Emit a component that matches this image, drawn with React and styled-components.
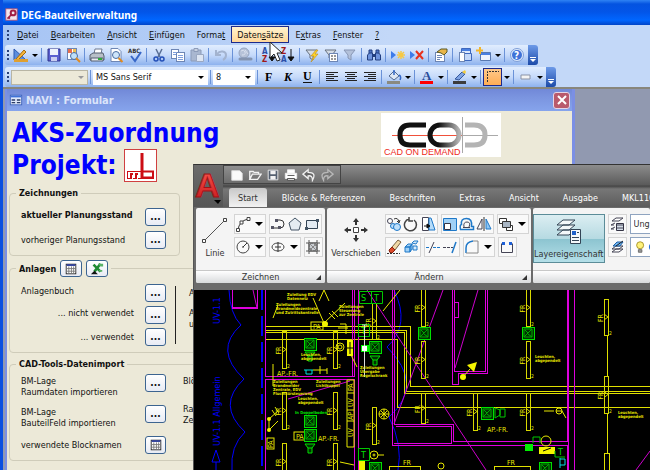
import React from "react";
import styled, { createGlobalStyle, css, ThemeProvider } from "styled-components";

const theme = {
  colors: {
    frame: "#0a4fe0",
    bar: "#c3d8f8",
    form: "#ece9d8",
    heading: "#0000ff",
    cad: "#6b6b6b",
    ribbon: "#f4f4f4",
  },
  fonts: {
    ui: '"DejaVu Sans Condensed", "Noto Sans", sans-serif',
    title: '"Noto Sans", "Open Sans", sans-serif',
  },
};

/* ---------- icons, all on a 16 x 16 grid ---------- */

const sheet = (x, y, w, h) => (
  <rect x={x} y={y} width={w} height={h} fill="#fff" stroke="#6d86b5" />
);

const funnel = (fill) => (
  <path d="M2 3h11l-4 5v5l-3-2V8z" fill={fill} stroke="#66707e" />
);

const sortText = (a, b) => (
  <>
    <text x="1" y="7" fontSize="8" fontWeight="bold" fill={a === "A" ? "#2b4fa8" : "#a01818"}>{a}</text>
    <text x="1" y="15" fontSize="8" fontWeight="bold" fill={b === "A" ? "#2b4fa8" : "#a01818"}>{b}</text>
    <path d="M11 2v10M8 10l3 4 3-4z" stroke="#111" fill="#111" />
  </>
);

const alignLines = (rows) => (
  <path d={rows.map(([x, w], i) => `M${x} ${3.5 + i * 2}h${w}`).join("")} stroke="#222" />
);

const icons = {
  design: (
    <>
      <path d="M1 2v11h12z" fill="#5b8ede" stroke="#2c58b0" />
      <path d="M3 12l8-9 2 2-8 8z" fill="#f5b53b" stroke="#a46a10" />
      <path d="M1 13.5h14" stroke="#e0a030" strokeWidth="3" />
    </>
  ),
  save: (
    <>
      <path d="M2 2h12v12H2z" fill="#5a5fd0" stroke="#30348c" />
      <path d="M4 2h8v6H4z" fill="#eef2fc" />
      <path d="M5 10h6v4H5z" fill="#c9cdf0" />
    </>
  ),
  fileSearch: (
    <>
      {sheet(2.5, 1.5, 9, 11)}
      <path d="M3 2h4v4H3z" fill="#e86f4e" />
      <path d="M8 2h3v4H8z" fill="#f0c050" />
      <circle cx="9" cy="9" r="3.5" fill="#bfe0fa" stroke="#4a6ca0" />
      <path d="M11 11l4 4" stroke="#e08a20" strokeWidth="2" />
    </>
  ),
  print: (
    <>
      <path d="M5 7l1-5h7l-1 5z" fill="#fff" stroke="#6d7890" />
      <path d="M1 8l3-2h10l1 3v4H1z" fill="#b8c0c8" stroke="#555f70" />
      <path d="M2 11h12v3H2z" fill="#e8ecf0" stroke="#555f70" />
      <path d="M9 12h4" stroke="#2faa3c" strokeWidth="2" />
    </>
  ),
  preview: (
    <>
      <path d="M3 1.5h7l3 3v10H3z" fill="#fff" stroke="#6d86b5" />
      <circle cx="8" cy="8" r="3.5" fill="#cfe6fa" stroke="#4a6ca0" />
      <path d="M10.5 11l4 4" stroke="#e08a20" strokeWidth="2" />
    </>
  ),
  spell: (
    <>
      <text x="1" y="6" fontSize="6" fontWeight="bold" fill="#333">ABC</text>
      <path d="M4 9l4 5 6-9" fill="none" stroke="#3767c8" strokeWidth="2" />
    </>
  ),
  cut: (
    <>
      <path d="M5 2l4 8M11 2l-4 8" stroke="#5a6f95" strokeWidth="1.5" />
      <circle cx="5" cy="12" r="2" fill="none" stroke="#2450b8" strokeWidth="1.5" />
      <circle cx="11" cy="12" r="2" fill="none" stroke="#2450b8" strokeWidth="1.5" />
    </>
  ),
  copy: (
    <>
      {sheet(1.5, 2.5, 7, 9)}
      {sheet(6.5, 5.5, 8, 9)}
      <path d="M3 5.5h4M3 7.5h3M8 8.5h5M8 10.5h5M8 12.5h5" stroke="#7f9fdc" />
    </>
  ),
  paste: (
    <>
      <path d="M2 3h10v11H2z" fill="#a9b7d0" stroke="#8c9bb8" />
      <path d="M5 1.5h4v3H5z" fill="#c9d2e2" stroke="#8c9bb8" />
      <path d="M7.5 7.5h7v7h-7z" fill="#dde5f2" stroke="#9aa8c2" />
    </>
  ),
  undo: <path d="M3 3v5h5M4 7c3-4 9-3 9 1 0 2-1 4-3 5" fill="none" stroke="#a3b3cf" strokeWidth="2" />,
  link: (
    <>
      <circle cx="7" cy="6" r="5" fill="#b6c2d8" stroke="#96a5c0" />
      <path d="M4 4q3-2 4 1t-3 3M8 3l3 4" fill="none" stroke="#d9e1ef" />
      <path d="M3 12h5M9 12h5" stroke="#8494b0" strokeWidth="3" strokeLinecap="round" />
    </>
  ),
  sortAsc: sortText("A", "Z"),
  sortDesc: sortText("Z", "A"),
  filterSelect: (
    <>
      {funnel("#d5dce6")}
      <path d="M12 3L7 9h3l-3 6 7-8h-3l3-4z" fill="#ffd42a" stroke="#c08a10" strokeWidth=".6" />
    </>
  ),
  filterForm: (
    <>
      {funnel("#d5dce6")}
      {sheet(6.5, 6.5, 8, 8)}
      <path d="M8 9h5M8 12h5" stroke="#333" strokeDasharray="2 1" />
    </>
  ),
  filter: <path d="M2 3h11l-4 5v5l-3-2V8z" fill="#b3c1da" stroke="#8796b4" />,
  find: (
    <>
      <path d="M3 3h3v4H3zM10 3h3v4h-3z" fill="#4d75c4" stroke="#223f80" />
      <path d="M1.5 8l2-2h3v7h-5zM9.5 6h3l2 2v5h-5z" fill="#6e93dc" stroke="#223f80" />
      <path d="M6 7h4v3H6z" fill="#223f80" />
    </>
  ),
  newRecord: (
    <>
      <path d="M1 4l5 4-5 4z" fill="#3d7bea" />
      <path d="M11 4v8M7 8h8M8 5l6 6M14 5l-6 6" stroke="#f6c945" strokeWidth="1.5" />
    </>
  ),
  deleteRecord: (
    <>
      <path d="M1 4l5 4-5 4z" fill="#3d7bea" />
      <path d="M7 4l7 8M14 4l-7 8" stroke="#e8311c" strokeWidth="2" />
    </>
  ),
  properties: (
    <>
      {sheet(2.5, 5.5, 9, 9)}
      <path d="M4 8.5h5M4 10.5h5M4 12.5h3" stroke="#6d86b5" />
      <path d="M4 5l4-3h6v3l-3 3-3-2z" fill="#e8b548" stroke="#5b5a28" />
    </>
  ),
  dbWindow: (
    <>
      <path d="M4.5 1.5h9v8h-9z" fill="#dce8fb" stroke="#3e68bd" />
      <path d="M5 2h8v2H5z" fill="#4a7fe0" />
      <path d="M7.5 6.5h7v7h-7z" fill="#c4d8f8" stroke="#3e68bd" />
      {sheet(2.5, 5.5, 5, 9)}
    </>
  ),
  newObject: (
    <>
      <path d="M4.5 5.5h10v8h-10z" fill="#eef3fc" stroke="#5878b0" />
      <path d="M5 6h9v2H5z" fill="#4a7fe0" />
      <path d="M4 0v7M0 3.5h7" stroke="#f3b62c" strokeWidth="2" />
    </>
  ),
  help: (
    <>
      <circle cx="8" cy="8" r="6.5" fill="#dbe8fc" stroke="#7f9fd8" />
      <circle cx="8" cy="8" r="5" fill="#3f72d8" />
      <text x="5" y="12" fontSize="10" fontWeight="bold" fill="#fff">?</text>
    </>
  ),
  bold: <text x="3" y="12" fontSize="12" fontWeight="bold" fontFamily="Liberation Serif, serif">F</text>,
  italic: <text x="3" y="12" fontSize="12" fontWeight="bold" fontStyle="italic" fontFamily="Liberation Serif, serif">K</text>,
  underline: (
    <>
      <text x="3" y="11" fontSize="12" fontWeight="bold" fontFamily="Liberation Serif, serif">U</text>
      <path d="M3 13.5h9" stroke="#111" />
    </>
  ),
  alignLeft: alignLines([[2, 12], [2, 8], [2, 12], [2, 8], [2, 12]]),
  alignCenter: alignLines([[2, 12], [4, 8], [2, 12], [4, 8], [2, 12]]),
  alignRight: alignLines([[2, 12], [6, 8], [2, 12], [6, 8], [2, 12]]),
  fill: (
    <>
      <path d="M3 7l5-5 5 5-5 4z" fill="#dfe8f5" stroke="#53698f" />
      <path d="M8 1v5M13 6c2 1 2 3 1 5" stroke="#3468c8" fill="none" strokeWidth="1.5" />
      <path d="M1 12h13v3H1z" fill="#8a8a80" />
    </>
  ),
  fontColor: (
    <>
      <text x="3" y="11" fontSize="13" fontWeight="bold" fontFamily="Liberation Serif, serif" fill="#2a4d9a">A</text>
      <path d="M1 12h13v3H1z" fill="#ff0000" />
    </>
  ),
  lineColor: (
    <>
      <path d="M3 10l7-7 3 2-6 6z" fill="#7fa3e4" stroke="#35589c" />
      <path d="M10 3l3-2 1 2-1 2z" fill="#f4cd3c" />
      <path d="M1 12h13v3H1z" fill="#3c3c3c" />
    </>
  ),
  border: <path d="M2.5 13V2.5H14" stroke="#333" strokeDasharray="2 1" fill="none" />,
  effect: <path d="M3 6h9v4H3z" fill="#f4f4f4" stroke="#8a93a6" />,
  grid: (
    <>
      <rect x="2.5" y="2.5" width="11" height="11" fill="#fff" stroke="#222" />
      <path d="M3 3.5h10" stroke="#2a3c9a" strokeWidth="2" />
      <path d="M3 7.5h10M3 10.5h10M5.5 5v8M8.5 5v8M11 5v8" stroke="#777" />
    </>
  ),
  excel: (
    <>
      <path d="M4 3l8 8M12 2L5 11" stroke="#1e8a32" strokeWidth="3" />
      <path d="M9 2h6v3h-3zM10 9h4v2h-3z" fill="#59b268" />
      <path d="M1 14l4-4 4 4z" fill="#111" />
    </>
  ),
  formWindow: (
    <>
      <rect x="1.5" y="2.5" width="13" height="11" fill="#dfe8fa" stroke="#3e62b8" />
      <path d="M2 4h12" stroke="#3f72d8" strokeWidth="2" />
      <path d="M3 8h4M3 11h4M9 8h4M9 11h4" stroke="#2c3c68" strokeWidth="1.5" />
    </>
  ),
  access: (
    <>
      <rect x="1" y="1" width="14" height="14" fill="#f2e5ec" stroke="#b05070" />
      <circle cx="10" cy="6" r="3" fill="none" stroke="#a21f45" strokeWidth="2.5" />
      <path d="M8 8l-5 5M4 11l2 2" stroke="#a21f45" strokeWidth="2" />
    </>
  ),
  /* quick access bar */
  qNew: <path d="M2 3h9l3 3v8H2z" fill="#fafafa" stroke="#ddd" />,
  qOpen: <path d="M2 13V4h4l1 1h5v2H5l-3 6h9l4-6H5" fill="none" stroke="#f2f2f2" strokeWidth="1.5" />,
  qSave: (
    <>
      <path d="M2.5 2.5h11v11h-11z" fill="#556070" stroke="#f2f2f2" />
      <path d="M5 3h6v4H5zM5 9h6v4H5z" fill="#f2f2f2" />
    </>
  ),
  qPrint: (
    <>
      <path d="M4 2h8v4H4zM1.5 6h13v6h-13z" fill="#fff" stroke="#eee" />
      <path d="M4 8.5h8M4 12h8v2H4z" stroke="#444" fill="#fff" />
    </>
  ),
  qUndo: <path d="M7 2L1 7l6 5V9q5-1 5 5 5-9-5-9z" fill="#666" stroke="#f0f0f0" strokeWidth="1.5" />,
  qRedo: <path d="M9 2l6 5-6 5V9q-5-1-5 5-5-9 5-9z" fill="#777" stroke="#b8b8b8" strokeWidth="1.5" />,
  /* draw panel */
  arc: (
    <>
      <path d="M3 14Q4 5 13 3" fill="none" stroke="#333" />
      <path d="M1.5 12.5h3v3h-3zM5 5h3v3H5zM12 1.5h3v3h-3z" fill="#fff" stroke="#444" />
    </>
  ),
  polyline: (
    <>
      <path d="M2 12h8q4 0 4-4t-4-4H7" fill="none" stroke="#333" />
      <path d="M1 10h3v3H1zM8 10h3v3H8zM5 3h3v3H5z" fill="#556" />
    </>
  ),
  polygon: <path d="M8 2l6 5-2 7H4L2 7z" fill="#e4ecf2" stroke="#456" />,
  rectangle: (
    <>
      <path d="M2.5 4.5h11v8h-11z" fill="#e3ebf3" stroke="#345" />
      <path d="M1 11h3v3H1zM12 3h3v3h-3z" fill="#456" />
    </>
  ),
  circle: (
    <>
      <circle cx="8" cy="8" r="6" fill="#fafafa" stroke="#444" />
      <path d="M8 8l4-4M7 8h2" stroke="#333" />
    </>
  ),
  ellipse: (
    <>
      <ellipse cx="8" cy="8" rx="6" ry="4" fill="#fafafa" stroke="#444" />
      <path d="M8 3v10M5 8h6" stroke="#333" />
    </>
  ),
  hatch: (
    <>
      <path d="M4 4h8v8H4zM4 1v14M12 1v14M1 4h14M1 12h14" fill="#c9cdd2" stroke="#555" />
      <path d="M4 8l4 4M4 4l8 8M8 4l4 4M12 4l-8 8" stroke="#888" />
    </>
  ),
  /* modify panel */
  copyObjects: (
    <>
      <circle cx="4" cy="5" r="2.5" fill="#fff" stroke="#445" />
      <circle cx="7" cy="10" r="2.5" fill="#bfe0fb" stroke="#1e78c8" />
      <circle cx="11" cy="11" r="3.5" fill="#bfe0fb" stroke="#1e78c8" />
      <path d="M8 3q4-2 5 3M11 5l2 2 1-3" fill="none" stroke="#333" />
    </>
  ),
  rotate: <path d="M6 3a6 6 0 1 0 5 1M6 1v4h4" fill="none" stroke="#444" strokeWidth="1.5" />,
  stretch: (
    <>
      <path d="M2.5 1.5h6v13h-6z" fill="#fff" stroke="#445" />
      <path d="M9 2h2l4 12H9z" fill="#b5dcfa" stroke="#1e78c8" />
      <path d="M4 10h4M7 8l3 2-3 2z" fill="#111" stroke="#111" />
    </>
  ),
  scale: (
    <>
      <path d="M1.5 2.5h13v12h-13z" fill="#9fd0f6" stroke="#1e78c8" />
      <path d="M2.5 7.5h6v6h-6z" fill="#fff" stroke="#334" />
    </>
  ),
  offset: (
    <>
      <path d="M1.5 13.5h13v-3h-2q1-8-5-8t-5 6q-2 0-1 5z" fill="none" stroke="#1e78c8" strokeWidth="1.5" />
      <path d="M4 11.5h7M5 11q-1-5 3-5t2 5" fill="none" stroke="#445" />
    </>
  ),
  mirror: (
    <>
      <path d="M6 3v10H1z" fill="#fff" stroke="#445" />
      <path d="M10 3v10h5z" fill="#8fc6f3" stroke="#1e78c8" />
      <path d="M8 1v14" stroke="#333" />
    </>
  ),
  array: (
    <>
      <path d="M1.5 2.5h7v5h-7zM8.5 9.5h6v5h-6z" fill="#fff" stroke="#333" />
      <path d="M4.5 5.5h8v6h-8z" fill="#a9b6c4" stroke="#333" />
    </>
  ),
  erase: (
    <>
      <path d="M6 8l6-7 3 2-6 8z" fill="#f0d8a6" stroke="#776040" />
      <path d="M3 11l3-3 3 3-3 3q-3 0-3-3z" fill="#dc4a2a" stroke="#8a2410" />
      <path d="M1 14.5h13" stroke="#333" strokeDasharray="2 1" />
    </>
  ),
  explode: (
    <>
      <path d="M2 8l3-3h4l-2 3zM2 8h5v5H2zM7 8l2-3v5l-2 3z" fill="#9fd0f6" stroke="#1e78c8" />
      <path d="M9 4l2-2h4l-2 3zM10 7h4v4h-4z" fill="#d4ebfd" stroke="#1e78c8" />
    </>
  ),
  trim: (
    <>
      <path d="M1 8.5h4M8 8.5h8" stroke="#1e78c8" strokeDasharray="3 1" />
      <path d="M9 3L4 14" stroke="#445" />
    </>
  ),
  extend: (
    <>
      <path d="M1 8.5h10" stroke="#445" strokeDasharray="3 1" />
      <path d="M14 3l-4 11" stroke="#1e78c8" strokeWidth="1.5" />
    </>
  ),
  fillet: (
    <>
      <path d="M2 14V9q0-6 7-7" fill="none" stroke="#1e78c8" strokeWidth="1.5" />
      <path d="M9 2h5v12H2" fill="none" stroke="#888" />
    </>
  ),
  join: (
    <>
      <path d="M2.5 4.5v9h11v-9" fill="none" stroke="#445" />
      <path d="M3 4.5h3M10 4.5h3" stroke="#1e60d8" strokeWidth="3" />
    </>
  ),
  layerState: (
    <>
      <path d="M3 5l4-3h7l-4 3zM2 9l4-2M2 13l4-2M2 9h3M2 13h3" fill="#fff" stroke="#445" />
      <path d="M7.5 7.5h7v7h-7z" fill="#d5dde8" stroke="#334" />
      <path d="M8 9h6M8 12h6" stroke="#445" />
    </>
  ),
  layerMatch: (
    <>
      <path d="M3 13l4-3h7l-4 3zM3 10l4-3h7l-4 3z" fill="#fff" stroke="#445" />
      <path d="M4 7l4-4h6l-3 4z" fill="#6fb5f0" stroke="#1e60a8" />
      <path d="M7 7l7-5" stroke="#222" />
    </>
  ),
  bulb: (
    <>
      <circle cx="7" cy="6" r="4" fill="#fff27a" stroke="#a08c20" />
      <path d="M5 11h4v3H5z" fill="#999" stroke="#666" />
    </>
  ),
  sun: (
    <>
      <circle cx="6" cy="8" r="5" fill="#2c74d8" />
      <circle cx="8" cy="8" r="4" fill="#ffe04a" />
    </>
  ),
};

const Icon = ({ name, size = 16 }) => (
  <svg width={size} height={size} viewBox="0 0 16 16" aria-hidden="true">
    {icons[name]}
  </svg>
);

/* ---------- toolbar data ---------- */

const menu = [
  ["", "D", "atei"],
  ["", "B", "earbeiten"],
  ["", "A", "nsicht"],
  ["", "E", "infügen"],
  ["Forma", "t", ""],
  ["Daten", "s", "ätze"],
  ["E", "x", "tras"],
  ["", "F", "enster"],
  ["", "?", ""],
];

// "|" is a divider, "v" the small arrow next to a split button
const standardBar = [
  "design", "v", "|", "save", "fileSearch", "|", "print", "preview", "spell", "|",
  "cut", "copy", "paste", "|", "undo", "|", "link", "|", "sortAsc", "sortDesc", "|",
  "filterSelect", "filterForm", "filter", "|", "find", "|", "newRecord", "deleteRecord", "|",
  "properties", "|", "dbWindow", "newObject", "v", "|", "help",
];

const formatBar = [
  "|", "bold", "italic", "underline", "|", "alignLeft", "alignCenter", "alignRight", "|",
  "fill", "v", "|", "fontColor", "v", "|", "lineColor", "v", "|", "border", "v", "|", "effect", "v",
];

const ToolItems = ({ items }) =>
  items.map((item, i) => {
    if (item === "|") return <Divider key={i} />;
    if (item === "v") return <DropArrow key={i} type="button" aria-label="Optionen" />;
    return (
      <ToolButton key={i} type="button" aria-label={item} $active={item === "border"}>
        <Icon name={item} />
      </ToolButton>
    );
  });

const Combo = ({ label, value, width, disabled }) => (
  <ComboBox $width={width} $disabled={disabled}>
    <select aria-label={label} disabled={disabled}>
      <option>{value}</option>
    </select>
    <i />
  </ComboBox>
);

/* ---------- form window ---------- */

const FormRow = ({ id, label, bold, right, icon, top }) => (
  <Row $top={top}>
    <RowLabel htmlFor={id} $bold={bold} $right={right} $top={top}>
      {label}
    </RowLabel>
    <FormButton id={id} type="button">
      {icon ? <Icon name={icon} size={14} /> : "..."}
    </FormButton>
  </Row>
);

const ProjectLogo = () => (
  <svg width="33" height="33" viewBox="0 0 33 33" role="img" aria-label="mb">
    <rect x=".5" y=".5" width="32" height="32" fill="#fff" stroke="#d04040" />
    <g fill="none" stroke="#cc0d14">
      <path d="M18 4v25" strokeWidth="3" />
      <path d="M18 22.5h11v6H18" strokeWidth="2" />
      <path d="M3.5 30v-8M3 22.5h14M3 29.5h3M9 29.5h2M14 29.5h16" />
      <path d="M7 30v-5h2M12 30v-5h2" strokeWidth="2" />
    </g>
  </svg>
);

const CodLogo = () => (
  <svg width="120" height="44" viewBox="0 0 120 44" role="img" aria-label="CAD ON DEMAND">
    <defs>
      <linearGradient id="ring">
        <stop offset="0.3" stopColor="#111" />
        <stop offset="1" stopColor="#b4b4b4" />
      </linearGradient>
    </defs>
    <rect width="120" height="44" fill="#fff" />
    <path d="M11 22.5h70" stroke="#f0503a" />
    <path d="M81 22.5h36" stroke="#aaa" />
    <path d="M45 12H29q-10 0-10 10t10 10h16" fill="none" stroke="#111" strokeWidth="5" />
    <rect x="49" y="12" width="29" height="20" rx="10" fill="none" stroke="url(#ring)" strokeWidth="5" />
    <path d="M84 12h9q11 0 11 10t-11 10h-9" fill="none" stroke="#b4b4b4" strokeWidth="5" />
    <path d="M81.5 4v36" stroke="#a8a8a8" />
    <text x="3" y="42" fontSize="9" fill="#ee2a1a" fontFamily="Liberation Sans, sans-serif">CAD ON DEMAND</text>
  </svg>
);

const FormWindow = () => (
  <NaviWindow>
    <NaviTitle>
      <Icon name="formWindow" size={14} />
      <span>NAVI : Formular</span>
      <CloseButton type="button" aria-label="Schließen">
        <svg width="10" height="10" viewBox="0 0 10 10" aria-hidden="true">
          <path d="M1 1l8 8M9 1L1 9" stroke="#fff" strokeWidth="2" />
        </svg>
      </CloseButton>
    </NaviTitle>
    <NaviBody>
      <NaviHeader>
        <h1>
          AKS-Zuordnung
          <span>
            Projekt: <ProjectLogo />
          </span>
        </h1>
        <CodLogo />
      </NaviHeader>
      <Group $narrow $pad={8}>
        <legend>Zeichnungen</legend>
        <Rows $gap={5}>
          <FormRow id="plan-now" label="aktueller Planungsstand" bold top />
          <FormRow id="plan-old" label="vorheriger Planungsstand" />
        </Rows>
      </Group>
      <Group $pad={7}>
        <legend>
          Anlagen
          <FormButton type="button" aria-label="Tabelle" $small><Icon name="grid" size={14} /></FormButton>
          <FormButton type="button" aria-label="Excel" $small><Icon name="excel" size={14} /></FormButton>
        </legend>
        <Split>
          <Rows $gap={4}>
            <FormRow id="book" label="Anlagenbuch" top />
            <FormRow id="unused" label="... nicht verwendet" right top />
            <FormRow id="used" label="... verwendet" right />
          </Rows>
          <Rule />
          <SideNotes>
            <p>A</p>
            <p>A<br />u</p>
          </SideNotes>
        </Split>
      </Group>
      <Group $pad={3}>
        <legend>CAD-Tools-Datenimport</legend>
        <Split>
          <Rows $gap={7}>
            <FormRow id="rooms" label={<>BM-Lage<br />Raumdaten importieren</>} top />
            <FormRow id="parts" label={<>BM-Lage<br />BauteilFeld importieren</>} top />
            <FormRow id="blocks" label="verwendete Blocknamen" icon="grid" />
          </Rows>
          <SideNotes $wide>
            <p>Blö</p>
            <p>Ra<br />Ze</p>
          </SideNotes>
        </Split>
      </Group>
    </NaviBody>
  </NaviWindow>
);

/* ---------- floor plan ---------- */

const Fixture = ({ x, y, h = 37 }) => (
  <g>
    <rect x={x + 0.5} y={y + 0.5} width="4" height={h} />
    <path d={`M${x} ${y + h / 2 - 3}l4 3-4 3`} />
    <g stroke="none" fill="#e8e800">
      <text transform={`translate(${x - 1} ${y + h / 2 + 5}) rotate(-90)`} fontSize="7">FR</text>
      {y + h < 468 && <text x={x + 5} y={y + h} fontSize="5">2</text>}
    </g>
  </g>
);

const Outlet = ({ x, y }) => (
  <g stroke="#00e000" fill="none">
    <rect x={x + 0.5} y={y + 0.5} width="12" height="12" fill="#003000" />
    <path d={`M${x + 2} ${y + 2}h8v8h-8zM${x + 2} ${y + 10}l8-8M${x + 6} ${y + 7}l4 3M${x + 3} ${y + 3}l3 3`} stroke="#00a800" />
  </g>
);

const Lamp = ({ x, y }) => (
  <path d={`M${x} ${y}h10l-3 4v5h-4v-5zM${x + 3} ${y + 4}h4`} stroke="#00e000" fill="#003000" />
);

const Note = ({ x, y, lines, color = "#e8e800" }) => (
  <text fontSize="4" fill={color} fontWeight="bold">
    {lines.map((line, i) => (
      <tspan key={i} x={x} y={y + i * 4}>{line}</tspan>
    ))}
  </text>
);

const fixtures = [
  [282, 331], [333, 331], [282, 392], [333, 392], [282, 443], [333, 443],
  [372, 303, 36], [372, 407], [421, 289], [421, 341], [421, 393, 30],
  [473, 393], [526, 289], [526, 341], [526, 393], [604, 299, 36], [604, 376],
];
const outlets = [
  [304, 338], [369, 341], [304, 415], [304, 429], [369, 462], [418, 327],
  [522, 327], [481, 407], [539, 462],
];
const lamps = [[305, 352], [370, 356], [305, 444]];

const FloorPlan = () => (
  <Plan viewBox="194 290 456 180" preserveAspectRatio="xMinYMin slice" role="img" aria-label="Grundriss">
    <g stroke="#0000ff" fill="none">
      <path d="M229 290Q230 314 241 325Q213 350 244 379Q216 405 245 432Q230 446 232 470" />
      <path d="M394 290Q411 325 387 347Q425 385 389 417Q403 445 398 470" />
      <path d="M262 290v180" strokeWidth="2" strokeDasharray="20 6" />
      <path d="M216 450l-4 12h8zM216 462v8" />
    </g>
    <g fill="#0000ff" fontSize="9">
      <text transform="translate(220 324) rotate(-90)">UV-1.1</text>
      <text transform="translate(220 446) rotate(-90)">UV-1.1 Allgemein</text>
    </g>

    <g stroke="#e0e000" fill="none" shapeRendering="crispEdges">
      <path d="M266 326.5H410.5V386.5H650M266 330.5H406.5V391.5H650M266 332.5H404.5V393.5H650M266 339.5H397.5V407.5H650" />
      <path d="M607.5 335V376M607.5 413V453M604.5 470v-17h5v17M494 470v-4h36v4M389 470v-4h31v4" />
    </g>

    <g stroke="#dd00dd" fill="none" shapeRendering="crispEdges">
      <path d="M232.5 290V308.5H257.5V290M232 307.5H257M265.5 290V376.5H354.5V290M265.5 470V379.5H354.5V470" />
      <path d="M358.5 290V470M352.5 290V376M392.5 290V445.5H567.5V470M394.5 290V424.5H453.5V441.5H567.5V290" />
      <path d="M396 426.5H451.5V443.5H394M568.5 290V470M574.5 290V470" />
      <path d="M452.5 290V384.5H458.5V373.5H487.5V290M485.5 290V371.5H454.5V290M455 302.5H458.5V317.5H455" />
    </g>
    <path
      d="M253 290L257 308M367 290L486 470M443 290L394 424M478 290L455 368M288 399L350 381M650 451L636 470"
      stroke="#cc00cc"
      fill="none"
    />

    <g stroke="#e8e800" fill="none">
      <path d="M319 301l5-11M324 290l5 11M313 298L324 323L345 303M383 311L400 290M273 318l5-13M273 364v22" />
      <path d="M313 370h14M320 366v8M327 368v6M269 419v11M269 419l9-8M269 430l9-9M272 410l4 6M275 407l4 6M329 313l6 6M332 311l6 6" />
      <path d="M351 355l6 12M340 324h6v10M338 328h10M340 462l14 3M544 411h10M556 411h6M562 411l4 7" />
      <rect x="311" y="322" width="12" height="8" />
      <rect x="294" y="432" width="12" height="8" />
      <rect x="267" y="438" width="7" height="11" />
      <path d="M347 380h7v67h-7zM347 393h7M347 410h7M347 421h7" />
      <circle cx="340" cy="347" r="4" />
      <circle cx="340" cy="347" r="2" />
      <circle cx="384" cy="414" r="5" />
      <circle cx="374" cy="455" r="4" />
      <circle cx="374" cy="455" r="1" />
      <circle cx="559" cy="411" r="3" />
      <circle cx="546" cy="441" r="5" />
      <circle cx="441" cy="466" r="3" />
      <path d="M379 414h10M384 409v10M381 411l6 6M387 411l-6 6M378 455h6M463 377l7-8" />
    </g>
    <g fill="#f4f400">
      <circle cx="325" cy="324" r="3" />
      <circle cx="269" cy="419" r="2" />
      <circle cx="269" cy="430" r="2" />
      <circle cx="463" cy="377" r="3" />
      <path d="M477 362l-10 3 7 7zM347 340h6v16h-6zM359 461h6v9h-6zM539 447h16v7h-16z" />
    </g>
    <path d="M347 348h6M350 342v12M543 451l8-3" stroke="#000" />

    <g stroke="#d8d800" fill="none">
      {fixtures.map(([x, y, h]) => (
        <Fixture key={`${x}-${y}`} x={x} y={y} h={h} />
      ))}
    </g>
    {outlets.map(([x, y]) => (
      <Outlet key={`${x}-${y}`} x={x} y={y} />
    ))}
    {lamps.map(([x, y]) => (
      <Lamp key={`${x}-${y}`} x={x} y={y} />
    ))}

    <g stroke="#00c800" fill="none">
      <path d="M359.5 291.5h23v12h-23zM371.5 291v12M358.5 324.5h11v12h-11zM358.5 448.5h11v12h-11z" />
      <path d="M495 408v10l5-3v-5zM500 409h5v8h-5zM533 443v-6h7v6M555 451v6h10" />
    </g>
    <path d="M361 345h8v7h-8zM525 444h8v7h-8z" fill="#00f000" />
    <g fill="#00e000" fontSize="9">
      <text x="361" y="301">S</text>
      <text x="374" y="301">T</text>
      <text x="361" y="334">T</text>
      <text x="361" y="458">T</text>
      <text x="558" y="455">T</text>
    </g>
    <path d="M304 370h9M306 370v4h6v-4M560 458v10M560 459h5v6h-5" stroke="#00e0e0" fill="none" />
    <path d="M364.5 325V377M362 325h5" stroke="#ddd" />
    <path d="M362 346h5v5h-5z" fill="#fff" />

    <g fill="#e8e800" fontSize="7">
      <text x="277" y="376">AP.-FR.</text>
      <text x="318" y="441">AP.-FR.</text>
      <text x="487" y="432">AP.-FR.</text>
      <text x="507" y="465">FR</text>
      <text x="403" y="465">FR</text>
      <text x="313" y="329">PA</text>
      <text x="296" y="439">PA</text>
      <text transform="translate(273 448) rotate(-90)">PA</text>
      <text transform="translate(353 391) rotate(-90)">PA</text>
      <text transform="translate(353 407) rotate(-90)">UV</text>
      <text transform="translate(353 420) rotate(-90)">AP</text>
      <text transform="translate(353 437) rotate(-90)">UV</text>
    </g>
    <Note x={287} y={296} lines={["Zuleitung EDV", "Datennetz"]} />
    <Note x={276} y={306} lines={["Zuleitungen", "Brandmeldezentrale", "und Zutrittskontrolle"]} />
    <Note x={339} y={308} lines={["Zuleitungen", "Steuerung", "zur Zentrale"]} />
    <Note x={301} y={356} lines={["Leuchten,", "abgependelt"]} />
    <Note x={273} y={383} lines={["Zuleitungen", "Brandmelder", "Zentrale, EDV", "Fluchttürsteuerung"]} />
    <Note x={316} y={383} lines={["Zuleitungen", "Lichtkuppel"]} />
    <Note x={298} y={400} lines={["Leuchten,", "abgependelt"]} />
    <Note x={360} y={369} lines={["Zuleitungen", "Übergabe", "Regelschrank"]} />
    <Note x={535} y={358} lines={["Leuchten,", "abgependelt"]} />
    <Note x={618} y={414} lines={["Leuchten,", "abgependelt"]} />
    <Note x={295} y={414} lines={["In Doppelboden"]} color="#00e000" />
  </Plan>
);

/* ---------- cad window ---------- */

const tabs = ["Start", "Blöcke & Referenzen", "Beschriften", "Extras", "Ansicht", "Ausgabe", "MKL110"];

const Tools = ({ names, arrow }) => (
  <ToolGroup>
    {names.map((name) => (
      <button key={name} type="button" aria-label={name}>
        <Icon name={name} />
      </button>
    ))}
    {arrow && <DropArrow type="button" aria-label="Mehr" $big />}
  </ToolGroup>
);

const CadWindow = () => (
  <Cad>
    <CadTop>
      <AppButton type="button" aria-label="Anwendungsmenü">
        <svg width="29" height="42" viewBox="0 0 29 42" aria-hidden="true">
          <defs>
            <linearGradient id="red" x2="0" y2="1">
              <stop offset="0" stopColor="#ff5a50" />
              <stop offset="1" stopColor="#c4141a" />
            </linearGradient>
          </defs>
          <text x="1" y="32" fill="url(#red)" stroke="#a01216" fontFamily="Liberation Sans, sans-serif" fontWeight="bold" fontSize="34">A</text>
          <path d="M20 35h7l-3 4z" fill="#000" />
        </svg>
      </AppButton>
      <CadBars>
        <QuickBar>
          {["qNew", "qOpen", "qSave", "qPrint", "qUndo", "qRedo"].map((name) => (
            <button key={name} type="button" aria-label={name}>
              <Icon name={name} size={14} />
            </button>
          ))}
        </QuickBar>
        <TabBar>
          {tabs.map((tab, i) => (
            <Tab key={tab} type="button" $active={i === 0}>{tab}</Tab>
          ))}
        </TabBar>
      </CadBars>
    </CadTop>
    <Ribbon>
      <Panel>
        <PanelTools>
          <BigButton type="button" $width={38}>
            <svg width="28" height="28" viewBox="0 0 28 28" aria-hidden="true">
              <path d="M3 25L24 4" stroke="#555" />
              <path d="M1.5 23.5h3v3h-3zM22.5 2.5h3v3h-3z" fill="#fff" stroke="#444" />
            </svg>
            Linie
          </BigButton>
          <ToolRows>
            <div>
              <Tools names={["arc"]} arrow />
              <Tools names={["polyline", "polygon", "rectangle"]} />
            </div>
            <div>
              <Tools names={["circle"]} arrow />
              <Tools names={["ellipse"]} arrow />
              <Tools names={["hatch"]} />
            </div>
          </ToolRows>
        </PanelTools>
        <PanelName>Zeichnen</PanelName>
      </Panel>
      <Panel>
        <PanelTools>
          <BigButton type="button" $width={58}>
            <svg width="28" height="28" viewBox="0 0 28 28" aria-hidden="true">
              <path d="M11.5 11.5h5v5h-5z" fill="#fff" stroke="#444" />
              <path d="M14 2l3 4h-2v3h-2V6h-2zM14 26l3-4h-2v-3h-2v3h-2zM2 14l4-3v2h3v2H6v2zM26 14l-4-3v2h-3v2h3v2z" fill="#333" />
            </svg>
            Verschieben
          </BigButton>
          <ToolRows>
            <div>
              <Tools names={["copyObjects", "rotate", "stretch"]} />
              <Tools names={["scale", "offset", "mirror"]} />
              <Tools names={["array"]} arrow />
            </div>
            <div>
              <Tools names={["erase", "explode"]} />
              <Tools names={["trim", "extend"]} />
              <Tools names={["fillet"]} arrow />
              <Tools names={["join"]} />
            </div>
          </ToolRows>
        </PanelTools>
        <PanelName>Ändern</PanelName>
      </Panel>
      <Panel $last>
        <PanelTools>
          <BigButton type="button" $width={75} $active>
            <svg width="28" height="28" viewBox="0 0 28 28" aria-hidden="true">
              <g fill="#f4f8fa" stroke="#345">
                <path d="M2 18l6-5h12l-6 5zM2 13l6-5h12l-6 5zM2 8l6-5h12l-6 5z" />
                <path d="M15.5 12.5h10v14h-10z" />
              </g>
              <path d="M17 14h4v4h-4z" fill="#1e60c8" />
              <path d="M17 20.5h7M17 23.5h7M22 15.5h2" stroke="#345" />
            </svg>
            Layereigenschaft
          </BigButton>
          <ToolRows $stack>
            <Tools names={["layerState"]} />
            <Tools names={["layerMatch"]} />
          </ToolRows>
          <LayerFields>
            <select aria-label="Layerstatus">
              <option>Ung</option>
            </select>
            <button type="button" aria-label="Layer">
              <Icon name="bulb" size={14} />
              <Icon name="sun" size={14} />
            </button>
          </LayerFields>
        </PanelTools>
        <PanelName $plain />
      </Panel>
    </Ribbon>
    <FloorPlan />
  </Cad>
);

const App = () => {
  return (
    <ThemeProvider theme={theme}>
      <GlobalStyle />
      <Desktop>
        <TitleBar>
          <Icon name="access" size={13} />
          DEG-Bauteilverwaltung
        </TitleBar>
        <Bars>
          <MenuBar>
            <Grip />
            {menu.map(([before, key, after]) => (
              <MenuItem key={before + key + after} type="button" $active={before === "Daten"}>
                {before}<u>{key}</u>{after}
                {before === "Daten" && (
                  <Pointer width="14" height="22" viewBox="0 0 14 22" aria-hidden="true">
                    <path d="M1 1v16l4-4 3 7 3-1-3-7h5z" fill="#fff" stroke="#222" />
                  </Pointer>
                )}
              </MenuItem>
            ))}
          </MenuBar>
          <Toolbar>
            <Grip />
            <ToolItems items={standardBar} />
            <BarEnd />
          </Toolbar>
          <Toolbar>
            <Grip />
            <Combo label="Objekt" value="" width={77} disabled />
            <Divider />
            <Combo label="Schriftart" value="MS Sans Serif" width={115} />
            <Divider />
            <Combo label="Schriftgrad" value="8" width={42} />
            <ToolItems items={formatBar} />
            <BarEnd />
          </Toolbar>
        </Bars>
        <Workspace>
          <FormWindow />
          <CadWindow />
        </Workspace>
      </Desktop>
    </ThemeProvider>
  );
};

const GlobalStyle = createGlobalStyle`
  * {
    box-sizing: border-box;
  }

  body {
    margin: 0;
    font-family: ${({ theme }) => theme.fonts.ui};
    font-size: 9px;
    color: #111;
  }

  button, select {
    margin: 0;
    padding: 0;
    border: 0;
    background: none;
    color: inherit;
    font: inherit;
  }

  svg {
    display: block;
    flex: none;
  }
`;

const Desktop = styled.main`
  display: flex;
  flex-direction: column;
  height: 100vh;
  overflow: hidden;
  border-left: 3px solid ${({ theme }) => theme.colors.frame};
  background: #9199b0;
`;

const TitleBar = styled.header`
  display: flex;
  align-items: center;
  gap: 3px;
  height: 25px;
  padding: 4px 2px 0;
  background: linear-gradient(#2f83f4 0, #0453e0 4px, #0355e8 12px, #0066ff 20px, #0044c8 100%);
  color: #fff;
  font-family: ${({ theme }) => theme.fonts.title};
  font-size: 10px;
  font-weight: bold;
`;

const Bars = styled.div`
  display: flex;
  flex-direction: column;
  gap: 2px;
  padding: 1px 2px 0;
  border-bottom: 2px solid #88867c;
  background: linear-gradient(90deg, #a6c4f4, ${({ theme }) => theme.colors.bar} 60%);
`;

const MenuBar = styled.nav`
  display: flex;
  align-items: center;
  height: 17px;
`;

const MenuItem = styled.button`
  position: relative;
  height: 17px;
  padding: 0 5px;
  border: 1px solid transparent;
  ${({ $active }) =>
    $active &&
    css`
      z-index: 2;
      border-color: #1c2a8c;
      background: linear-gradient(#fff3cf, #ffd79a);
    `}
`;

const Pointer = styled.svg`
  position: absolute;
  top: 14px;
  left: 37px;
`;

const Grip = styled.span`
  width: 6px;
  height: 12px;
  flex: none;
  background: radial-gradient(circle, #27407a 1px, transparent 1px) 0 0 / 6px 4px;
`;

const Toolbar = styled.div`
  display: flex;
  align-items: center;
  align-self: flex-start;
  height: 20px;
  border-radius: 3px;
  background: linear-gradient(#e1edfe, #c6dafa 50%, #8db2ee);
`;

const ToolButton = styled.button`
  display: grid;
  place-items: center;
  width: 19px;
  height: 18px;
  ${({ $active }) =>
    $active &&
    css`
      border: 1px solid #1c2a8c;
      background: linear-gradient(#ffc98a, #ffad55);
    `}
`;

const DropArrow = styled.button`
  width: 9px;
  height: 16px;
  &::before {
    content: "";
    display: block;
    width: 0;
    margin: 0 auto;
    border: ${({ $big }) => ($big ? "4px" : "3px")} solid transparent;
    border-top-color: #000;
    border-bottom: 0;
  }
`;

const Divider = styled.span`
  width: 1px;
  height: 14px;
  margin: 0 2px;
  background: #6a92d8;
`;

const BarEnd = styled.span`
  display: flex;
  flex-direction: column;
  justify-content: flex-end;
  align-items: center;
  gap: 1px;
  width: 10px;
  height: 20px;
  margin-left: 2px;
  padding-bottom: 3px;
  border-radius: 0 3px 3px 0;
  background: linear-gradient(#6d9ae8, #1c4aa8);
  &::before {
    content: "";
    width: 6px;
    height: 1px;
    background: #fff;
  }
  &::after {
    content: "";
    border: 3px solid transparent;
    border-top-color: #fff;
    border-bottom: 0;
  }
`;

const ComboBox = styled.span`
  display: flex;
  align-items: center;
  width: ${({ $width }) => $width}px;
  height: 15px;
  padding-right: 3px;
  border: 1px solid ${({ $disabled }) => ($disabled ? "#b8b5a4" : "#fff")};
  background: ${({ $disabled, theme }) => ($disabled ? theme.colors.form : "#fff")};
  select {
    flex: 1;
    min-width: 0;
    padding-left: 2px;
    appearance: none;
  }
  i {
    border: 3px solid transparent;
    border-top-color: ${({ $disabled }) => ($disabled ? "#999" : "#000")};
    border-bottom: 0;
  }
`;

const Workspace = styled.section`
  position: relative;
  flex: 1;
  min-height: 0;
  overflow: hidden;
`;

const NaviWindow = styled.section`
  width: 570px;
  max-width: 100%;
  margin-left: 2px;
  border: solid #7b8fe4;
  border-width: 0 3px 0 2px;
`;

const NaviTitle = styled.header`
  display: flex;
  align-items: center;
  gap: 3px;
  height: 22px;
  padding: 0 2px;
  background: linear-gradient(#7188d8, #7b95e0 40%, #86a4ec);
  color: #dbe4fa;
  font-size: 11px;
  font-weight: bold;
  span {
    flex: 1;
  }
`;

const CloseButton = styled.button`
  display: grid;
  place-items: center;
  width: 17px;
  height: 17px;
  border: 1px solid #e4d6e6;
  border-radius: 3px;
  background: #b95a6c;
`;

const NaviBody = styled.div`
  height: 420px;
  padding: 2px 0 0 2px;
  background: ${({ theme }) => theme.colors.form};
`;

const NaviHeader = styled.div`
  display: flex;
  justify-content: space-between;
  align-items: flex-start;
  padding: 0 71px 5px 3px;
  h1 {
    margin: 0;
    padding-top: 4px;
    color: ${({ theme }) => theme.colors.heading};
    font-size: 26px;
    line-height: 32px;
  }
  span {
    display: flex;
    align-items: center;
    gap: 7px;
    height: 32px;
  }
`;

const Group = styled.fieldset`
  width: ${({ $narrow }) => ($narrow ? "171px" : "auto")};
  min-width: 0;
  margin: 0 0 4px;
  padding: ${({ $pad }) => $pad}px 0 6px 11px;
  border: 1px solid #cfccba;
  border-radius: 4px;
  legend {
    display: flex;
    align-items: center;
    gap: 4px;
    margin-left: -5px;
    padding: 0 3px;
    font-weight: bold;
    line-height: 14px;
  }
`;

const Rows = styled.div`
  display: grid;
  gap: ${({ $gap }) => $gap}px;
`;

const Row = styled.div`
  display: grid;
  grid-template-columns: 113px 21px;
  column-gap: 11px;
  align-items: ${({ $top }) => ($top ? "start" : "center")};
`;

const RowLabel = styled.label`
  padding-top: ${({ $top }) => ($top ? "2px" : "0")};
  line-height: 11px;
  white-space: nowrap;
  font-weight: ${({ $bold }) => ($bold ? "bold" : "normal")};
  text-align: ${({ $right }) => ($right ? "right" : "left")};
`;

const FormButton = styled.button`
  display: grid;
  place-items: center;
  width: ${({ $small }) => ($small ? "22px" : "21px")};
  height: ${({ $small }) => ($small ? "17px" : "18px")};
  border: 1px solid #3c6490;
  border-radius: 3px;
  background: linear-gradient(#fff, #e8ebf4);
  font-size: 10px;
  font-weight: bold;
  line-height: 10px;
`;

const Split = styled.div`
  display: flex;
`;

const Rule = styled.span`
  width: 1px;
  margin: 2px 13px 2px 9px;
  background: #222;
`;

const SideNotes = styled.div`
  display: grid;
  align-content: start;
  gap: ${({ $wide }) => ($wide ? "17px" : "9px")};
  padding: ${({ $wide }) => ($wide ? "2px 0 0 17px" : "4px 0 0")};
  p {
    margin: 0;
    line-height: 11px;
  }
`;

const Cad = styled.section`
  position: absolute;
  top: 75px;
  left: 190px;
  right: 0;
  bottom: 0;
  display: flex;
  flex-direction: column;
  overflow: hidden;
  border-top: 1px solid #333;
  border-left: 1px solid #555;
  background: #000;
  color: #333;
`;

const CadTop = styled.header`
  display: flex;
  height: 42px;
  flex: none;
  background: linear-gradient(#8c8c8c, #5a5a5a 20px, #444 21px, #777 24px, #5c5c5c 100%);
`;

const AppButton = styled.button`
  width: 29px;
  height: 42px;
  background: linear-gradient(#6c6c6c, #555);
`;

const CadBars = styled.div`
  display: flex;
  flex-direction: column;
  flex: 1;
  min-width: 0;
  justify-content: space-between;
`;

const QuickBar = styled.div`
  display: flex;
  align-items: center;
  align-self: flex-start;
  height: 19px;
  padding: 0 4px;
  border: 1px solid #444;
  background: linear-gradient(#909090, #6c6c6c);
  button {
    display: grid;
    place-items: center;
    width: 18px;
  }
`;

const TabBar = styled.nav`
  display: flex;
  gap: 6px;
  padding-left: 6px;
`;

const Tab = styled.button`
  height: 19px;
  padding: 0 9px;
  border-radius: 3px 3px 0 0;
  background: ${({ $active }) => ($active ? "linear-gradient(#c8c8c8, #f2f2f2)" : "none")};
  color: ${({ $active }) => ($active ? "#333" : "#fff")};
  white-space: nowrap;
`;

const Ribbon = styled.div`
  display: flex;
  gap: 2px;
  height: 83px;
  flex: none;
  padding: 1px 0 7px 2px;
  background: ${({ theme }) => theme.colors.cad};
`;

const Panel = styled.section`
  display: flex;
  flex-direction: column;
  flex: ${({ $last }) => ($last ? "1" : "none")};
  min-width: 0;
  overflow: hidden;
  border-radius: 2px;
  background: ${({ theme }) => theme.colors.ribbon};
`;

const PanelTools = styled.div`
  display: flex;
  flex: 1;
  padding: 6px 2px 0 0;
`;

const PanelName = styled.footer`
  height: 13px;
  border-top: 1px solid #c8c8c8;
  background: linear-gradient(#fff, #d8dadc);
  line-height: 12px;
  text-align: center;
  ${({ $plain }) =>
    !$plain &&
    css`
      display: grid;
      grid-template-columns: 1fr auto 1fr;
      align-items: center;
      &::before {
        content: "";
      }
      &::after {
        content: "";
        justify-self: end;
        margin-right: 4px;
        border: solid transparent;
        border-width: 0 0 5px 5px;
        border-bottom-color: #333;
      }
    `}
`;

const BigButton = styled.button`
  display: flex;
  flex-direction: column;
  align-items: center;
  gap: 4px;
  width: ${({ $width }) => $width}px;
  height: 49px;
  padding-top: 2px;
  white-space: nowrap;
  ${({ $active }) =>
    $active &&
    css`
      border: 1px solid #5b8c98;
      background: linear-gradient(#dceef2, #b6dae2 50%, #8cc4d0 51%, #b4dfe8);
    `}
`;

const ToolRows = styled.div`
  display: grid;
  align-content: start;
  gap: 3px;
  margin-left: ${({ $stack }) => ($stack ? "3px" : "0")};
  div {
    display: flex;
    gap: 3px;
  }
`;

const ToolGroup = styled.span`
  display: flex;
  align-items: center;
  height: 20px;
  border: 1px solid #d4d4d4;
  background: #f9f9f9;
  button {
    width: 17px;
    height: 16px;
  }
  ${DropArrow} {
    width: 13px;
  }
`;

const LayerFields = styled.div`
  display: grid;
  align-content: start;
  flex: none;
  gap: 3px;
  width: 180px;
  margin-left: 3px;
  select,
  button {
    display: flex;
    align-items: center;
    height: 20px;
    padding-left: 3px;
    border: 1px solid #8fa4c0;
    background: #fff;
    appearance: none;
  }
`;

const Plan = styled.svg`
  flex: 1;
  width: 100%;
  min-height: 0;
  background: #000;
`;

export default App;
